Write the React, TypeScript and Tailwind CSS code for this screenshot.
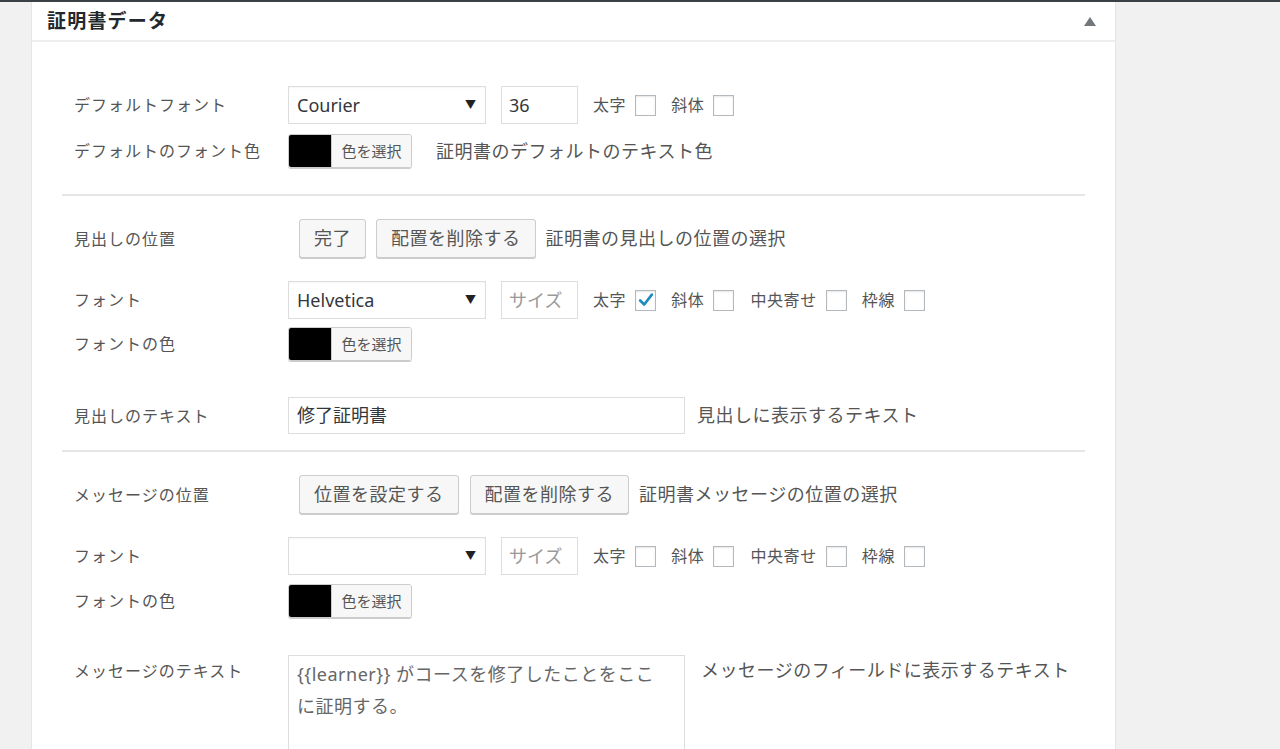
import React from "react";

const font = { fontFamily: '"Noto Sans", "Noto Sans CJK JP", sans-serif' };

const Label: React.FC<{ children: React.ReactNode }> = ({ children }) => (
  <div className="w-[226px] shrink-0 pl-[12px] text-[16px] tracking-[1px] text-[#555]">{children}</div>
);

const Select: React.FC<{ value?: string }> = ({ value }) => (
  <div className="w-[198px] h-[38px] border border-[#ddd] bg-white flex items-center justify-between pl-[8px] pr-[9px] shadow-[inset_0_1px_2px_rgba(0,0,0,0.04)]">
    <span className="text-[18px] text-[#32373c]">{value}</span>
    <span className="text-[11px] text-[#222]">▼</span>
  </div>
);

const SizeInput: React.FC<{ value?: string }> = ({ value }) => (
  <div className="ml-[15px] w-[77px] h-[38px] border border-[#ddd] bg-white flex items-center pl-[7px] text-[18px]">
    {value ? <span className="text-[#32373c]">{value}</span> : <span className="text-[#999]">サイズ</span>}
  </div>
);

const Check: React.FC<{ label: string; checked?: boolean; className?: string }> = ({ label, checked, className }) => (
  <div className={`flex items-center ${className ?? ""}`}>
    <span className="text-[16px] tracking-[0.6px] text-[#555]">{label}</span>
    <span className="ml-[9px] w-[21px] h-[21px] border border-[#b4b9be] bg-white flex items-center justify-center shadow-[inset_0_1px_2px_rgba(0,0,0,0.1)]">
      {checked && (
        <svg width="18" height="18" viewBox="0 0 20 20">
          <path d="M3.5 10.5 L8 15 L16.5 4" fill="none" stroke="#1e8cbe" strokeWidth="3" strokeLinecap="round" strokeLinejoin="round" />
        </svg>
      )}
    </span>
  </div>
);

const ColorButton: React.FC = () => (
  <div className="flex h-[34px] w-[124px] rounded-[3px] border border-[#ccc] shadow-[0_1px_0_#ccc] overflow-hidden">
    <div className="w-[42px] bg-black" />
    <div className="flex-1 bg-[#f7f7f7] border-l border-[#ccc] flex items-center justify-center text-[15px] text-[#555]">色を選択</div>
  </div>
);

const Button: React.FC<{ children: React.ReactNode; className?: string }> = ({ children, className }) => (
  <div className={`h-[39px] px-[14px] rounded-[3px] border border-[#ccc] bg-[#f7f7f7] shadow-[0_1px_0_#ccc] flex items-center text-[18px] tracking-[0.5px] text-[#555] ${className ?? ""}`}>
    {children}
  </div>
);

const Desc: React.FC<{ children: React.ReactNode; className?: string }> = ({ children, className }) => (
  <span className={`text-[18px] tracking-[0.5px] text-[#555] ${className ?? ""}`}>{children}</span>
);

const FontRow: React.FC<{ value?: string; bold?: boolean; className?: string }> = ({ value, bold, className }) => (
  <div className={`flex items-center ${className ?? ""}`}>
    <Label>フォント</Label>
    <Select value={value} />
    <SizeInput />
    <Check label="太字" checked={bold} className="ml-[15px]" />
    <Check label="斜体" className="ml-[15px]" />
    <Check label="中央寄せ" className="ml-[16px]" />
    <Check label="枠線" className="ml-[15px]" />
  </div>
);

export default function App() {
  return (
    <div className="w-full h-[749px] overflow-hidden bg-[#f1f1f1] border-t-2 border-[#3c4146]" style={font}>
      <div className="flex h-full">
        <div className="w-[31px] shrink-0" />
        <div className="w-[1085px] shrink-0 bg-white border-x border-[#e5e5e5]">
          <div className="h-[40px] border-b-2 border-[#eee] flex items-center justify-between pl-[15px] pr-[19px]">
            <h2 className="text-[19px] font-bold text-[#23282d] tracking-[1.2px]">証明書データ</h2>
            <svg width="12" height="9" viewBox="0 0 12 9">
              <path d="M6 0 L12 9 L0 9 Z" fill="#72777c" />
            </svg>
          </div>

          <div className="px-[30px] pt-[44px]">
            <div className="flex items-center">
              <Label>デフォルトフォント</Label>
              <Select value="Courier" />
              <SizeInput value="36" />
              <Check label="太字" className="ml-[15px]" />
              <Check label="斜体" className="ml-[15px]" />
            </div>
            <div className="flex items-center mt-[10px]">
              <Label>デフォルトのフォント色</Label>
              <ColorButton />
              <Desc className="ml-[24px]">証明書のデフォルトのテキスト色</Desc>
            </div>

            <div className="mt-[26px] h-[2px] bg-[#e5e5e5]" />

            <div className="flex items-center mt-[23px]">
              <Label>見出しの位置</Label>
              <Button className="ml-[11px]">完了</Button>
              <Button className="ml-[10px]">配置を削除する</Button>
              <Desc className="ml-[10px]">証明書の見出しの位置の選択</Desc>
            </div>
            <FontRow value="Helvetica" bold className="mt-[23px]" />
            <div className="flex items-center mt-[8px]">
              <Label>フォントの色</Label>
              <ColorButton />
            </div>
            <div className="flex items-center mt-[36px]">
              <Label>見出しのテキスト</Label>
              <div className="w-[397px] h-[37px] border border-[#ddd] bg-white flex items-center pl-[8px] text-[18px] text-[#32373c]">修了証明書</div>
              <Desc className="ml-[12px]">見出しに表示するテキスト</Desc>
            </div>

            <div className="mt-[16px] h-[2px] bg-[#e5e5e5]" />

            <div className="flex items-center mt-[23px]">
              <Label>メッセージの位置</Label>
              <Button className="ml-[11px]">位置を設定する</Button>
              <Button className="ml-[11px]">配置を削除する</Button>
              <Desc className="ml-[10px]">証明書メッセージの位置の選択</Desc>
            </div>
            <FontRow className="mt-[23px]" />
            <div className="flex items-center mt-[9px]">
              <Label>フォントの色</Label>
              <ColorButton />
            </div>
            <div className="flex items-start mt-[37px]">
              <div className="pt-[4px]">
                <Label>メッセージのテキスト</Label>
              </div>
              <div className="w-[397px] h-[140px] border border-[#ddd] bg-white pl-[8px] pr-[8px] pt-[2px] text-[18px] tracking-[0.5px] leading-[32px] text-[#666]">
                <div>{"{{learner}}"} がコースを修了したことをここ</div>
                <div>に証明する。</div>
              </div>
              <Desc className="ml-[16px] pt-[2px]">メッセージのフィールドに表示するテキスト</Desc>
            </div>
          </div>
        </div>
      </div>
    </div>
  );
}
